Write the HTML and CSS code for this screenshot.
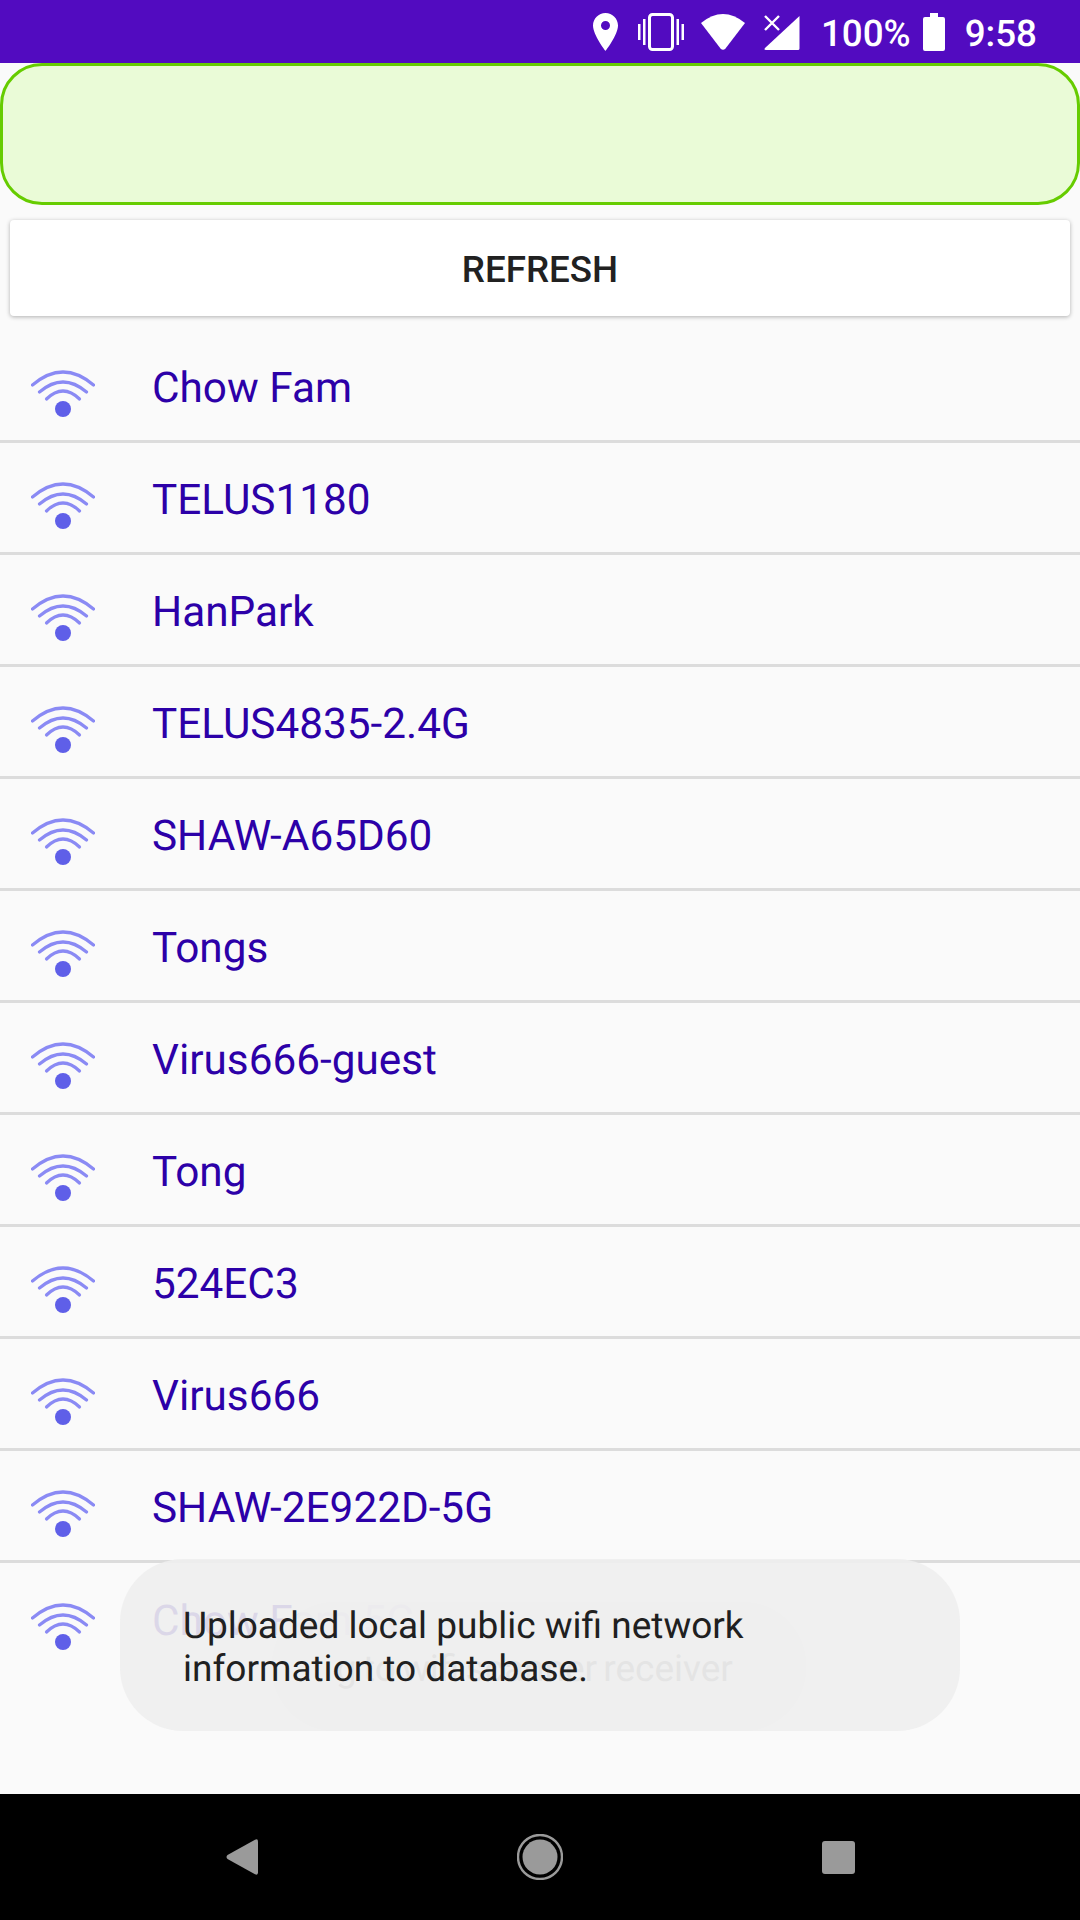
FILE: index.html
```html
<!DOCTYPE html>
<html lang="en">
<head>
  <meta charset="UTF-8">
  <title>Wifi networks</title>
  <link rel="stylesheet" href="styles.css">
</head>
<body>
  <svg class="defs" width="0" height="0">
    <symbol id="wifi" viewBox="0 0 64 48">
      <g class="wifi-arcs">
        <path d="M1.5 15 Q32 -11 62.5 15"/>
        <path d="M8.5 22 Q32 2 55.5 22"/>
        <path d="M15.5 29 Q32 13 48.5 29"/>
      </g>
      <circle class="wifi-dot" cx="32" cy="39" r="8"/>
    </symbol>
  </svg>

  <div class="status-bar">
    <svg class="st-pin" width="25" height="38" viewBox="0 0 25 38"><path fill-rule="evenodd" d="M12.5 0C5.6 0 0 5.6 0 12.5 0 21.9 12.5 38 12.5 38S25 21.9 25 12.5C25 5.6 19.4 0 12.5 0ZM12.5 17a4.5 4.5 0 1 1 0-9 4.5 4.5 0 0 1 0 9Z"/></svg>
    <svg class="st-vibrate" width="46" height="38" viewBox="0 0 46 38">
      <rect x="11.5" y="1.5" width="23" height="35" rx="3" class="outline"/>
      <rect x="0" y="11" width="2.5" height="16"/>
      <rect x="5" y="6" width="2.5" height="26"/>
      <rect x="38.5" y="6" width="2.5" height="26"/>
      <rect x="43.5" y="11" width="2.5" height="16"/>
    </svg>
    <svg class="st-wifi" width="46" height="36" viewBox="0 0 46 36"><path d="M1 9Q23 -9 45 9L25.5 34.5Q23 37 20.5 34.5Z"/></svg>
    <svg class="st-signal" width="36" height="35" viewBox="0 0 36 35">
      <path d="M35.5 1V33.5Q35.5 35 34 35H2Q-.5 35 1 33Z"/>
      <path d="M1 1L15 15M15 1L1 15" class="outline thin"/>
    </svg>
    <span class="st-text st-percent">100%</span>
    <svg class="st-battery" width="22" height="38" viewBox="0 0 22 38"><path d="M7 0H15V4H20Q22 4 22 6V36Q22 38 20 38H2Q0 38 0 36V6Q0 4 2 4H7Z"/></svg>
    <span class="st-text st-time">9:58</span>
  </div>

  <div class="result-box"></div>

  <button class="refresh-btn">REFRESH</button>

  <ul class="wifi-list">
    <li class="wifi-row"><svg class="wifi-icon"><use href="#wifi"/></svg><span>Chow Fam</span></li>
    <li class="wifi-row"><svg class="wifi-icon"><use href="#wifi"/></svg><span>TELUS1180</span></li>
    <li class="wifi-row"><svg class="wifi-icon"><use href="#wifi"/></svg><span>HanPark</span></li>
    <li class="wifi-row"><svg class="wifi-icon"><use href="#wifi"/></svg><span>TELUS4835-2.4G</span></li>
    <li class="wifi-row"><svg class="wifi-icon"><use href="#wifi"/></svg><span>SHAW-A65D60</span></li>
    <li class="wifi-row"><svg class="wifi-icon"><use href="#wifi"/></svg><span>Tongs</span></li>
    <li class="wifi-row"><svg class="wifi-icon"><use href="#wifi"/></svg><span>Virus666-guest</span></li>
    <li class="wifi-row"><svg class="wifi-icon"><use href="#wifi"/></svg><span>Tong</span></li>
    <li class="wifi-row"><svg class="wifi-icon"><use href="#wifi"/></svg><span>524EC3</span></li>
    <li class="wifi-row"><svg class="wifi-icon"><use href="#wifi"/></svg><span>Virus666</span></li>
    <li class="wifi-row"><svg class="wifi-icon"><use href="#wifi"/></svg><span>SHAW-2E922D-5G</span></li>
    <li class="wifi-row"><svg class="wifi-icon"><use href="#wifi"/></svg><span>Chow Fam 5G</span></li>
  </ul>

  <div class="toast toast-back">g to wifi scanner receiver</div>
  <div class="toast toast-front">Uploaded local public wifi network<br>information to database.</div>

  <div class="nav-bar">
    <div class="nav-cell"><svg width="32" height="36" viewBox="0 0 32 36"><path d="M29 .8Q32 -.6 32 2.5V33.5Q32 36.6 29 35.2L1.5 20Q-.5 18 1.5 16Z"/></svg></div>
    <div class="nav-cell"><svg width="46" height="46" viewBox="0 0 46 46"><circle cx="23" cy="23" r="22" class="ring"/><circle cx="23" cy="23" r="17.5"/></svg></div>
    <div class="nav-cell"><svg width="33" height="33" viewBox="0 0 33 33"><rect width="33" height="33" rx="3"/></svg></div>
  </div>
</body>
</html>
```

FILE: styles.css
```css
html, body { margin: 0; padding: 0; }
body { position: relative; width: 1080px; height: 1920px; overflow: hidden; display: flex; flex-direction: column; background: #fafafa; font-family: Roboto, "Noto Sans", sans-serif; text-rendering: geometricPrecision; }
.defs { position: absolute; }

.status-bar { flex: none; height: 63px; background: #520bc0; display: flex; align-items: center; justify-content: flex-end; padding-right: 43px; color: white; }
.status-bar svg { flex: none; fill: white; }
.status-bar .outline { fill: none; stroke: white; stroke-width: 3; }
.status-bar .thin { stroke-width: 2.4; }
.st-pin { margin-right: 20px; }
.st-vibrate { margin-right: 16px; }
.st-wifi { margin-right: 18px; }
.st-signal { margin-right: 21px; margin-top: 2px; }
.st-text { font-size: 36.75px; font-weight: 500; line-height: 63px; padding-top: 3px; }
.st-percent { margin-right: 12px; }
.st-battery { margin-right: 20px; }

.result-box { flex: none; box-sizing: border-box; height: 142px; background: #eafbd7; border: 3px solid #66cc00; border-radius: 42px; }

.refresh-btn { flex: none; display: block; height: 96px; margin: 15px 10px; padding: 2px 0 0; border: none; border-radius: 4px; background: white; box-shadow: 0 1px 4px rgba(0,0,0,0.3); color: #212121; font-family: inherit; font-size: 36.75px; font-weight: 500; }

.wifi-list { flex: 1; list-style: none; margin: 0; padding: 0; }
.wifi-row { box-sizing: border-box; height: 112px; display: flex; align-items: center; padding-left: 31px; border-bottom: 3px solid #dcdcdc; color: #2c00a8; font-size: 42.3px; }
.wifi-row:last-child { border-bottom: none; }
.wifi-row span { padding-top: 5px; }
.wifi-icon { flex: none; width: 64px; height: 48px; margin: 16px 57px 0 0; }
.wifi-arcs path { fill: none; stroke: #8a8af4; stroke-width: 3.2; stroke-linecap: round; }
.wifi-dot { fill: #5f5fe8; }

.toast { position: absolute; box-sizing: border-box; font-size: 37px; line-height: 43px; border-radius: 63px; }
.toast-back { left: 272px; top: 1602px; width: 534px; height: 129px; padding: 46px 64px; white-space: nowrap; word-spacing: -3px; background: rgba(237,237,237,0.85); color: #808080; }
.toast-front { left: 120px; top: 1559px; width: 840px; height: 172px; padding: 46px 63px; background: rgba(238,238,238,0.9); color: #202020; }

.nav-bar { flex: none; height: 126px; background: black; display: flex; align-items: center; justify-content: center; }
.nav-cell { width: 298px; display: flex; justify-content: center; }
.nav-cell svg { fill: #9a9a9a; }
.nav-cell .ring { fill: none; stroke: #9a9a9a; stroke-width: 2.4; }
```
